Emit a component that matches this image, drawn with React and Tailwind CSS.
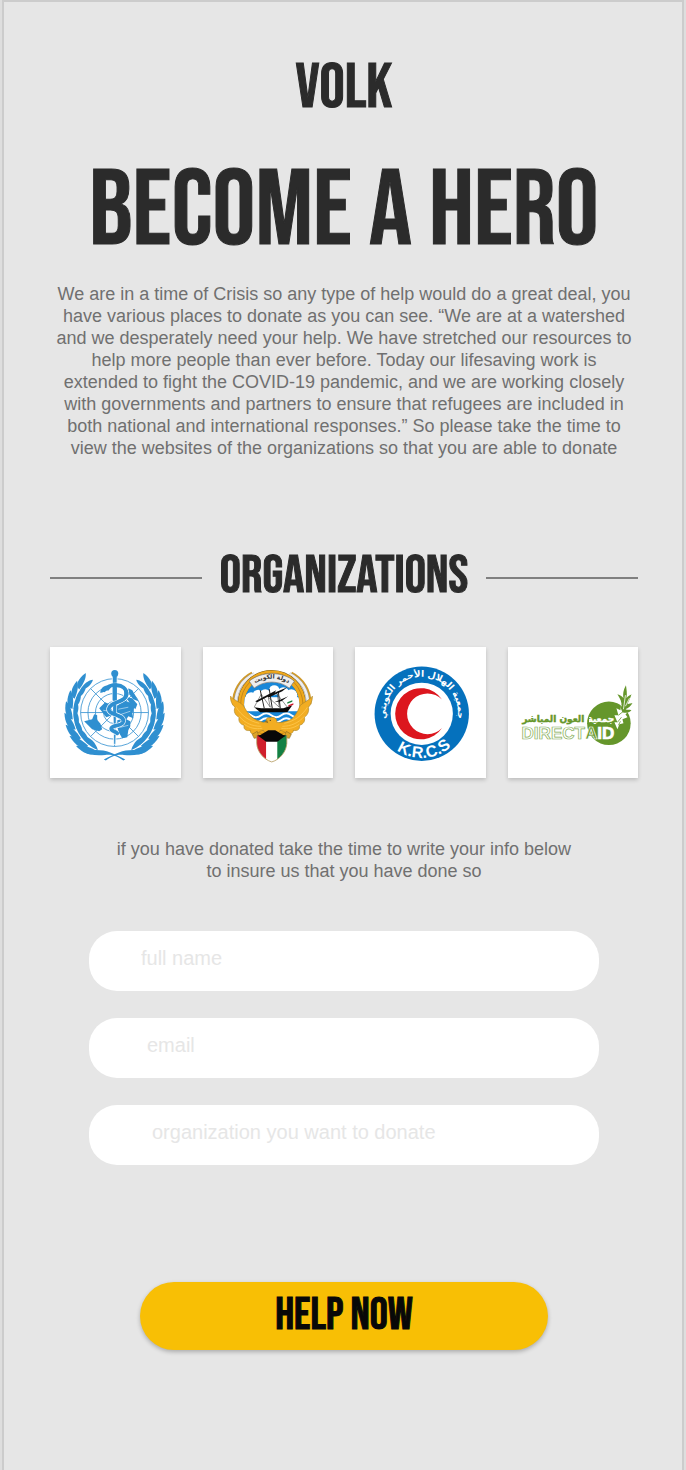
const display = "font-['Bebas_Neue','Roboto_Condensed','Liberation_Sans',sans-serif] font-normal";
const heading = `${display} text-[#2b2b2b] [-webkit-text-stroke:1px_#2b2b2b]`;

const LEAVES = [0, 1, 2, 3, 4, 5, 6, 7];

function Branch() {
  return (
    <g>
      {LEAVES.map((i) => {
        const deg = 120 + i * 14;
        const a = (deg * Math.PI) / 180;
        const x = 64.3 + 41.5 * Math.cos(a);
        const y = 65.3 + 41.5 * Math.sin(a);
        return (
          <g key={i} transform={`translate(${x} ${y}) rotate(${deg + 90}) scale(${1.1 - i * 0.03})`}>
            <path d="M-4 -0.500C-3 -7 5 -9 15 -6C11 -2 4 -0.500 -4 -0.500Z" />
            <path d="M-4 0.700C1 5.500 8 7.500 14 5C11 1.500 4 -0.500 -4 0.700Z" />
          </g>
        );
      })}
    </g>
  );
}

function WhoLogo() {
  return (
    <svg viewBox="0 0 130 130" className="block w-full" aria-hidden="true" fill="#2f8fd0">
      <g fill="none" stroke="#2f8fd0" strokeWidth="0.8">
        <circle cx="64.3" cy="65.3" r="33.8" />
        <circle cx="64.3" cy="65.3" r="26.5" />
        <circle cx="64.3" cy="65.3" r="19" />
        <circle cx="64.3" cy="65.3" r="11" />
        <path d="M30.5 65.3H98M40.4 41.4L88.2 89.2M40.4 89.2L88.2 41.4M64.3 31V99" />
      </g>
      <path d="M34 74L42 72L44 67L47 68L47 73L50 76L52 82L49 84L42 82L38 78Z" />
      <path d="M49 61L55 55L61 58L62 68L56 70L53 66Z" />
      <path d="M66 59L74 53L81 56L84 60L82 66L83 71L78 69L75 74L68 71L63 66Z" />
      <path d="M67 73L74 71L80 74L80 79L78 83L77 90L72 91L69 86L67 80Z" />
      <path d="M78 41L82 43L88 54L83 52L79 47Z" />
      <path d="M76 50L82 51L87 57L85 62L80 57Z" />
      <g stroke="#fff" strokeWidth="0.5" fill="none">
        <path d="M68 62L78 60M71 67L80 64M70 80L78 78M53 63L59 64" />
      </g>
      <path d="M62 28H67L65.500 97H63.500Z" stroke="#fff" strokeWidth="0.800" />
      <circle cx="64.500" cy="26.400" r="3.500" />
      <path d="M54 43C58 36 76 36 76 46C77 56 59 54 58.500 62C58.500 68 74 67 73 74C72 80 61 77 61 81.500C61 84 65 84 67 86" fill="none" stroke="#fff" strokeWidth="5" />
      <path d="M54 43C58 36 76 36 76 46C77 56 59 54 58.500 62C58.500 68 74 67 73 74C72 80 61 77 61 81.500C61 84 65 84 67 86" fill="none" stroke="#2f8fd0" strokeWidth="3.800" strokeLinecap="round" />
      <path d="M73 39C81 43 80 52 70 55C75 49 75 44 73 39Z" />
      <path d="M50 45.500C51 39 56 37 61 40L58 43.500C55 43 54 46 50 45.500Z" />
      <path d="M62.400 36H66.600V53H62.400ZM63 57H66V67H63Z" />
      <Branch />
      <g transform="matrix(-1 0 0 1 128.600 0)">
        <Branch />
      </g>
      <path d="M33 104C43 102 52 102 60 105C65 107 70 109 75 112L73 113C66 108 61 107 55 107.500C47 108 39 108 33 104Z" />
      <path d="M95.600 104C85.600 102 76.600 102 68.600 105C63.600 107 58.600 109 53.600 112L55.600 113C62.600 108 67.600 107 73.600 107.500C81.600 108 89.600 108 95.600 104Z" />
    </svg>
  );
}

function KuwaitLogo() {
  return (
    <svg viewBox="0 0 130 130" className="block w-full" aria-hidden="true">
      <defs>
        <clipPath id="kw-sky">
          <circle cx="68.500" cy="57" r="27.500" />
        </clipPath>
        <clipPath id="kw-shield">
          <path d="M53.500 88H83.500V96C83 104 77 112 68.500 114.500C60 112 54 104 53.500 96Z" />
        </clipPath>
      </defs>
      <path d="M30.500 57C30 44 37 32 49 26M106.500 57C107 44 100 32 88 26" fill="none" stroke="#d09a2a" strokeWidth="3" />
      <path d="M32.500 58C32 44 39 33 51 27M104.500 58C105 44 98 33 86 27" fill="none" stroke="#999" strokeWidth="3.600" />
      <path d="M32.500 58C32 44 39 33 51 27M104.500 58C105 44 98 33 86 27" fill="none" stroke="#eee" strokeWidth="2.800" />
      <circle cx="68.500" cy="57" r="30.500" fill="none" stroke="#7a5c1a" strokeWidth="7.200" />
      <circle cx="68.500" cy="57" r="30.500" fill="none" stroke="#efa81c" strokeWidth="6.200" />
      <circle cx="68.500" cy="57" r="31" fill="none" stroke="#a87517" strokeWidth="0.600" />
      <g clipPath="url(#kw-sky)">
        <rect x="40" y="28" width="58" height="60" fill="#1787d8" />
        <g fill="#fff">
          <circle cx="48" cy="51" r="6" />
          <circle cx="55" cy="48" r="5.500" />
          <circle cx="62" cy="48" r="6" />
          <circle cx="71" cy="43" r="5" />
          <circle cx="80" cy="46" r="6" />
          <circle cx="88" cy="48" r="6" />
          <rect x="40" y="50" width="58" height="14" />
        </g>
        <g fill="none" stroke="#fff" strokeWidth="1.800">
          <path d="M38 68q5 -4 10 0t10 0t10 0t10 0t10 0t10 0" />
          <path d="M38 73q5 -4 10 0t10 0t10 0t10 0t10 0t10 0" />
          <path d="M38 78q5 -4 10 0t10 0t10 0t10 0t10 0t10 0" />
        </g>
      </g>
      <path d="M51 60L58 61H80L89 58L84 65H57Z" fill="#080808" />
      <path d="M61 61L57 43M69 61L66 42M77 61L75 44" stroke="#111" strokeWidth="0.900" />
      <path d="M51 60L58 47L67 60L65 50L76 60L74 47L84 60" fill="none" stroke="#222" strokeWidth="0.500" />
      <path d="M52 54L73 43L71 46L54 55ZM63 49L84 40L79 44L66 50ZM71 55L85 49L78 54Z" fill="#111" />
      <path d="M84 57L89 53L90 57L85 59Z" fill="#fff" />
      <path d="M84 55L89 53L89 54.500L84 56.500Z" fill="#19813e" />
      <path d="M85 58L90 56L90 57.500L85 59.500Z" fill="#ce1126" />
      <path d="M46 34C58 24 79 24 91 34L86 41C76 33 61 33 51 41Z" fill="#eee" stroke="#666" strokeWidth="0.600" />
      <path id="kw-arc" d="M48 39C60 29 77 29 89 39" fill="none" />
      <text className="font-['DejaVu_Sans',sans-serif] text-[6px] font-bold" fill="#333" textAnchor="middle">
        <textPath href="#kw-arc" startOffset="50%">دولة الكويت</textPath>
      </text>
      <path
        d="M27.500 49C30 53 36 54 40 58C44 65 48 72 57 74C61 76 63 75 63 73C63 71 64 70 67 70.500C71 69 74 72 73.500 75C77 76 84 74 88 72C93 68 95 62 97 58C102 54 106 53 109 49C109 54 107 58 105 60C106 64 104 68 101 70C102 74 100 77 96 78C97 82 94 84 90 83C90 86 87 87 84 86C81 85 79 83 77 83L73 88H64L60 83C57 83 55 86 52 87C49 87 47 86 47 83C43 84 40 82 41 78C37 77 35 74 36 70C32 68 30 64 32 60C29 58 27 53 27.500 49Z"
        fill="#f2ad22"
        stroke="#b08a2a"
        strokeWidth="0.700"
      />
      <path d="M36 69C42 76 49 79 58 79M41 77C47 81 52 82 59 81M101 69C95 76 87 79 79 79M96 77C90 81 85 82 78 81M33 60C38 68 46 74 56 76M104 60C99 68 91 74 81 76" fill="none" stroke="#ffc950" strokeWidth="0.800" />
      <path d="M64 73L61 74.500L65 76" fill="#997220" />
      <circle cx="67" cy="73" r="0.600" fill="#2a2a2a" />
      <path d="M49 87L54 84L56 90L51 91ZM83 84L88 87L86 91L81 90Z" fill="#dca427" stroke="#8a6b24" strokeWidth="0.600" />
      <g clipPath="url(#kw-shield)">
        <rect x="53" y="86" width="10" height="30" fill="#d01f2c" />
        <rect x="63" y="86" width="11" height="30" fill="#fff" />
        <rect x="74" y="86" width="10" height="30" fill="#138044" />
        <path d="M53 87H84L74 94.500H63Z" fill="#080808" />
      </g>
      <path d="M53.500 88V96C54 104 60 112 68.500 114.500C77 112 83 104 83.500 96V88" fill="none" stroke="#b49a5d" strokeWidth="0.800" />
      <path d="M55 89L65 83H72L82 89Z" fill="#080808" />
    </svg>
  );
}

function KrcsLogo() {
  return (
    <svg viewBox="0 0 130 130" className="block w-full" aria-hidden="true">
      <circle cx="66.500" cy="66.500" r="47" fill="#0571bd" />
      <circle cx="66.500" cy="66.500" r="31" fill="#fff" />
      <path d="M86.700 52.300A25.500 25.500 0 1 0 86.700 80.700A20.300 20.300 0 1 1 86.700 52.300Z" fill="#dc161e" />
      <path id="krcs-top" d="M32 76A36 36 0 1 1 101 76" fill="none" />
      <path id="krcs-bottom" d="M22.500 66.500A44 44 0 0 0 110.500 66.500" fill="none" />
      <text className="font-['DejaVu_Sans',sans-serif] text-[9px] font-bold" fill="#fff" textAnchor="middle">
        <textPath href="#krcs-top" startOffset="50%">جمعية الهلال الأحمر الكويتي</textPath>
      </text>
      <text className="font-['Liberation_Sans',sans-serif] text-[16px] font-bold" fill="#fff" textAnchor="middle">
        <textPath href="#krcs-bottom" startOffset="52%">K.R.C.S</textPath>
      </text>
    </svg>
  );
}

function DirectAidLogo() {
  return (
    <svg viewBox="0 0 130 130" className="block w-full" aria-hidden="true">
      <defs>
        <linearGradient id="aid-split" gradientUnits="userSpaceOnUse" x1="0" y1="0" x2="130" y2="0">
          <stop offset="0.620" stopColor="#65962b" />
          <stop offset="0.620" stopColor="#fff" />
        </linearGradient>
        <clipPath id="aid-disc">
          <circle cx="100.500" cy="76" r="21.700" />
        </clipPath>
      </defs>
      <circle cx="100.500" cy="76" r="21.700" fill="#65962b" />
      <path
        clipPath="url(#aid-disc)"
        d="M109 82L106 75L109 75L106 68L110 68L108 61L112 63L113 54L117 57L122 55L119 62L122 63L117 67L119 70L114 72L115 76L111 77Z"
        fill="#fff"
      />
      <path d="M109 75L113 70M110 68L115 64M113 61L118 59M110 78L112 74" stroke="#65962b" strokeWidth="0.800" />
      <path d="M113 56C112 51 110 49 109 47C112 48 114 49 115 51C114 45 116 41 117.500 38C118 42 119 46 118 51C120 48 122 48 123 47C122 51 120 54 119 57C121 56 123 56 124 56C122 59 120 61 117 62C119 63 121 62 123 63C120 66 117 66 114 65L112 60Z" fill="#65962b" />
      <path d="M115 62L117 48M113 59L111 52M117 59L121 51" stroke="#fff" strokeWidth="0.800" />
      <text x="60" y="75" textAnchor="middle" className="font-['DejaVu_Sans',sans-serif] text-[9px] font-bold" fill="url(#aid-split)" stroke="url(#aid-split)" strokeWidth="0.400">
        جمعية العون المباشر
      </text>
      <text x="13.500" y="92" className="font-['Liberation_Sans',sans-serif] text-[17px] font-bold" fill="#fff" stroke="#84ad55" strokeWidth="0.700">
        DIRECT
        <tspan fill="#65962b" stroke="#fff">A</tspan>
        <tspan stroke="#fff">ID</tspan>
      </text>
    </svg>
  );
}

const ORGANIZATIONS = [
  { name: "World Health Organization", Logo: WhoLogo },
  { name: "State of Kuwait", Logo: KuwaitLogo },
  { name: "K.R.C.S", Logo: KrcsLogo },
  { name: "Direct Aid", Logo: DirectAidLogo },
];

const FIELDS = [
  { id: "name", type: "text", label: "full name", indent: "pl-[52px]" },
  { id: "email", type: "email", label: "email", indent: "pl-[58px]" },
  { id: "organization", type: "text", label: "organization you want to donate", indent: "pl-[63px]" },
];

export default function App() {
  return (
    <div className="min-h-screen bg-[#dedede] px-[2px] font-['Liberation_Sans',Arial,sans-serif]">
      <main className="flex min-h-screen flex-col border-2 border-b-0 border-[#cccccc] bg-[#e6e6e6] pt-[54px] pr-[44px] pl-[46px] text-center text-[18px] leading-[22px] text-[#707070]">
        <p className={`${heading} text-[63px] leading-[64px]`}>VOLK</p>
        <h1 className={`${heading} mt-9 text-[107px] leading-[112px] whitespace-nowrap`}>BECOME A HERO</h1>
        <p className="mt-[15px]">
          We are in a time of Crisis so any type of help would do a great deal, you
          <br />
          have various places to donate as you can see. “We are at a watershed
          <br />
          and we desperately need your help. We have stretched our resources to
          <br />
          help more people than ever before. Today our lifesaving work is
          <br />
          extended to fight the COVID-19 pandemic, and we are working closely
          <br />
          with governments and partners to ensure that refugees are included in
          <br />
          both national and international responses.” So please take the time to
          <br />
          view the websites of the organizations so that you are able to donate
        </p>

        <section className="mt-[85px]">
          <div className="flex items-center gap-[18px]">
            <span className="mt-1 h-[2px] flex-1 bg-[#808080]" />
            <h2 className={`${heading} text-[53px] leading-[64px]`}>ORGANIZATIONS</h2>
            <span className="mt-1 h-[2px] flex-1 bg-[#808080]" />
          </div>
          <div className="mt-[39px] grid grid-cols-4 gap-[22px]">
            {ORGANIZATIONS.map(({ name, Logo }) => (
              <a key={name} href="#donate" aria-label={name} className="block bg-white shadow-[0_2px_4px_rgba(0,0,0,0.18)]">
                <Logo />
              </a>
            ))}
          </div>
        </section>

        <form id="donate" className="mt-[60px] flex flex-col items-center" onSubmit={(e) => e.preventDefault()}>
          <p>
            if you have donated take the time to write your info below
            <br />
            to insure us that you have done so
          </p>
          <div className="mt-[49px] flex w-full flex-col gap-[27px] px-[39px]">
            {FIELDS.map(({ id, type, label, indent }) => (
              <input
                key={id}
                id={id}
                name={id}
                type={type}
                aria-label={label}
                placeholder={label}
                className={`${indent} h-[60px] w-full rounded-[28px] bg-white pr-8 pb-1 text-[20px] text-[#2b2b2b] outline-none placeholder:text-[#e6e6e6]`}
              />
            ))}
          </div>
          <div className="mt-[117px] w-full px-[90px]">
            <button
              type="submit"
              className={`${display} h-[68px] w-full cursor-pointer rounded-[34px] bg-[#f8bf05] text-[45px] leading-[60px] text-[#080808] shadow-[0_2px_4px_rgba(0,0,0,0.25)] [-webkit-text-stroke:1px_#080808]`}
            >
              HELP NOW
            </button>
          </div>
        </form>
      </main>
    </div>
  );
}
